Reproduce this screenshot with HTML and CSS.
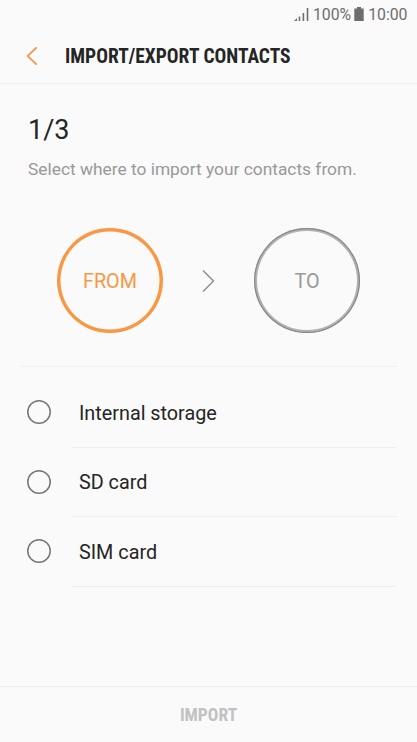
FILE: index.html
```html
<!DOCTYPE html>
<html lang="en">
<head>
<meta charset="utf-8">
<title>Import/Export Contacts</title>
<link rel="stylesheet" href="styles.css">
</head>
<body>
<div class="status">
  <svg class="signal" width="15" height="14" viewBox="0 0 15 14"><path d="M0 14 3 11v3zM4.700 9.500h1.600V14H4.700zM8.600 6h1.600v8H8.600zM12.700 1h1.600v13h-1.600z"/></svg>
  <span class="pct">100%</span>
  <svg class="battery" width="10" height="14" viewBox="0 0 10 14"><path d="M3 0h4v1.500h2.700V14H.3V1.500H3z"/></svg>
  <span class="time">10:00</span>
</div>
<header class="bar">
  <svg class="back" width="12" height="20" viewBox="0 0 12 20"><path d="M10.700 1.300 1.700 10l9 8.700"/></svg>
  <h1 class="title">IMPORT/EXPORT CONTACTS</h1>
</header>
<main class="content">
  <div class="step">1/3</div>
  <p class="hint">Select where to import your contacts from.</p>
  <div class="route">
    <div class="circle from">FROM</div>
    <svg class="arrow" width="14" height="24" viewBox="0 0 14 24"><path d="M1 1.500 11.500 12 1 22.500"/></svg>
    <div class="circle to">TO</div>
  </div>
  <ul class="options">
    <li class="option"><svg class="radio" width="24" height="24" viewBox="0 0 24 24"><circle cx="12" cy="12" r="11.200"/></svg><span class="label">Internal storage</span></li>
    <li class="option"><svg class="radio" width="24" height="24" viewBox="0 0 24 24"><circle cx="12" cy="12" r="11.200"/></svg><span class="label">SD card</span></li>
    <li class="option"><svg class="radio" width="24" height="24" viewBox="0 0 24 24"><circle cx="12" cy="12" r="11.200"/></svg><span class="label">SIM card</span></li>
  </ul>
</main>
<footer class="footer">IMPORT</footer>
</body>
</html>
```
FILE: styles.css
```css
* { box-sizing: border-box; }
body { margin: 0; width: 417px; height: 742px; display: flex; flex-direction: column; overflow: hidden; background: #fafafa; color: #252525; font-family: Roboto, sans-serif; }
.status { height: 28px; display: flex; align-items: center; justify-content: flex-end; padding-right: 9.500px; font-size: 15.800px; color: #6e6e6e; }
.status svg { fill: #6e6e6e; }
.status span { padding-top: 1px; }
.pct { margin: 0 3px 0 4px; }
.time { margin-left: 4px; }
.bar { height: 56px; display: flex; align-items: center; padding-left: 26px; border-bottom: 1px solid #efefef; }
.back { fill: none; stroke: #f5923e; stroke-width: 1.700; }
.title { margin: 3px 0 0 27px; font-stretch: condensed; font-size: 19.500px; font-weight: 700; line-height: 24px; white-space: nowrap; }
.content { flex: 1; }
.step { margin: 30px 0 0 28px; font-size: 27px; line-height: 32px; }
.hint { margin: 13px 0 0 28px; font-size: 17.350px; line-height: 20px; color: #999; white-space: nowrap; }
.route { display: flex; align-items: center; justify-content: space-between; height: 105px; margin: 49px 57.300px 33px; }
.circle { width: 105.400px; height: 105.400px; border-radius: 50%; display: flex; align-items: center; justify-content: center; padding-top: 2px; font-size: 19.800px; }
.from { box-shadow: inset 0 0 0 3.500px #fa9742; color: #fa9742; }
.to { box-shadow: inset 0 0 0 1.200px #888, inset 0 0 0 3px #b2b2b2; color: #999; }
.arrow { flex: none; fill: none; stroke: #8b8b8b; stroke-width: 1.400; }
.options { list-style: none; margin: 0 20px; padding: 11px 0 0; border-top: 1px solid #f0f0f0; }
.option { display: flex; align-items: center; height: 69.500px; padding-left: 7.300px; font-size: 19.800px; background: linear-gradient(#eee, #eee) 52px 100% / 325px 1px no-repeat; }
.radio { flex: none; margin-bottom: 1px; fill: none; stroke: #757575; stroke-width: 1.500; }
.label { margin: 1px 0 0 27.700px; }
.footer { height: 56px; border-top: 1px solid #efefef; display: flex; align-items: center; justify-content: center; color: #c2c2c2; font-stretch: condensed; font-size: 17.500px; font-weight: 700; }
```
